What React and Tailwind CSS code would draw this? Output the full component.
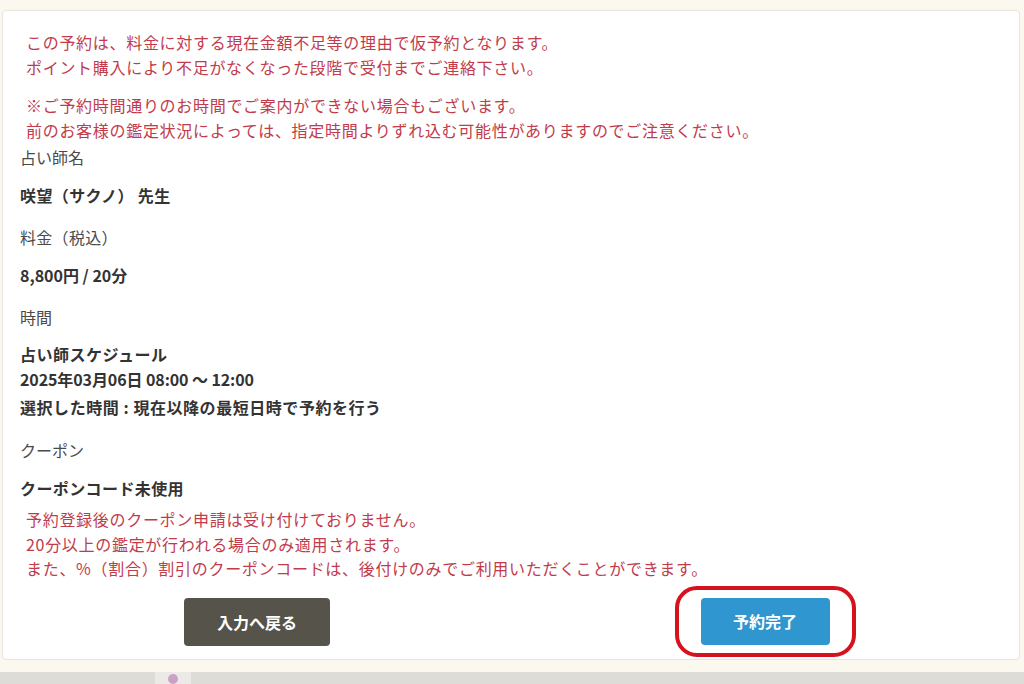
import React from 'react';

const font = { fontFamily: '"Noto Sans CJK JP", "Noto Sans", sans-serif' };

function Label({ children, className = '' }) {
  return <div className={`h-[25px] leading-[25px] text-[16px] text-[#4a4a4a] ${className}`}>{children}</div>;
}

function Value({ children, className = '' }) {
  return <div className={`h-[25px] leading-[25px] text-[16px] font-bold text-[#333] ${className}`}>{children}</div>;
}

export default function App() {
  return (
    <div className="w-[1024px] h-[684px] overflow-hidden bg-[#fbf9ef] flex flex-col" style={font}>
      {/* Card */}
      <div className="mt-[10px] ml-[2px] w-[1018px] h-[650px] bg-white border border-[#e6e4dc] rounded-[4px] pl-[17px] pt-[19px]">
        {/* Notice */}
        <div className="pl-[6px] text-[16px] leading-[25px] tracking-[0.7px] text-[#c23b4b]">
          <p>この予約は、料金に対する現在金額不足等の理由で仮予約となります。</p>
          <p>ポイント購入により不足がなくなった段階で受付までご連絡下さい。</p>
          <p className="mt-[13px]">※ご予約時間通りのお時間でご案内ができない場合もございます。</p>
          <p>前のお客様の鑑定状況によっては、指定時間よりずれ込む可能性がありますのでご注意ください。</p>
        </div>

        <Label className="mt-[2px]">占い師名</Label>
        <Value className="mt-[13px] tracking-[0.4px]">咲望（サクノ） 先生</Value>

        <Label className="mt-[17px] tracking-[0.3px]">料金（税込）</Label>
        <Value className="mt-[13px]">8,800円 / 20分</Value>

        <Label className="mt-[17px]">時間</Label>
        <Value className="mt-[12px] tracking-[0.5px]">占い師スケジュール</Value>
        <Value className="tracking-[-0.1px]">2025年03月06日 08:00 ～ 12:00</Value>
        <Value className="mt-[3px] tracking-[0.55px]">選択した時間 : 現在以降の最短日時で予約を行う</Value>

        <Label className="mt-[18px]">クーポン</Label>
        <Value className="mt-[13px] tracking-[0.4px]">クーポンコード未使用</Value>

        <div className="mt-[6px] pl-[6px] text-[16px] leading-[24.5px] tracking-[0.7px] text-[#c23b4b]">
          <p>予約登録後のクーポン申請は受け付けておりません。</p>
          <p>20分以上の鑑定が行われる場合のみ適用されます。</p>
          <p>また、%（割合）割引のクーポンコードは、後付けのみでご利用いただくことができます。</p>
        </div>

        {/* Buttons */}
        <div className="mt-[17px] -ml-[17px] grid grid-cols-2">
          <div className="flex justify-center">
            <button className="w-[146px] h-[48px] rounded-[4px] bg-[#56544a] text-white text-[16px] font-bold">
              入力へ戻る
            </button>
          </div>
          <div className="flex justify-center">
            <div className="relative">
              <button className="w-[129px] h-[47px] rounded-[4px] bg-[#2f96cf] text-white text-[16px] font-bold">
                予約完了
              </button>
              <div className="absolute -left-[26px] -top-[12px] w-[181px] h-[71px] border-[4px] border-[#d7121f] rounded-[22px]" />
            </div>
          </div>
        </div>
      </div>

      {/* Bottom strip */}
      <div className="mt-[12px] flex-1 bg-[#dedcd6] flex items-start">
        <div className="ml-[155px] w-[36px] h-[12px] bg-[#eceae6] flex justify-center items-start">
          <div className="w-[10px] h-[10px] mt-[2px] rounded-full bg-[#c9a3c6]" />
        </div>
      </div>
    </div>
  );
}
